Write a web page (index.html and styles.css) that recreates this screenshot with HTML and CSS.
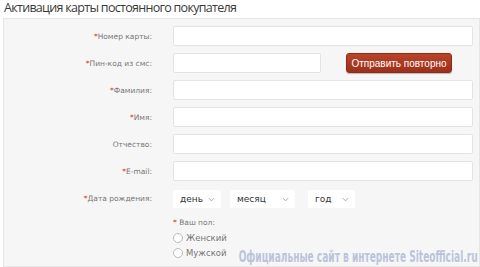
FILE: index.html
```html
<!DOCTYPE html>
<html lang="ru">
<head>
    <meta charset="UTF-8">
    <meta name="viewport" content="width=device-width, initial-scale=1.0">
    <title>Активация карты постоянного покупателя</title>
    <link rel="stylesheet" href="styles.css">
</head>
<body>
    <h1 class="title">Активация карты постоянного покупателя</h1>
    <div class="panel">
        <div class="row">
            <label class="label"><span class="req">*</span>Номер карты:</label>
            <input class="field" type="text">
        </div>
        <div class="row">
            <label class="label"><span class="req">*</span>Пин-код из смс:</label>
            <div class="inline">
                <input class="field short" type="text">
                <button class="resend">Отправить повторно</button>
            </div>
        </div>
        <div class="row">
            <label class="label"><span class="req">*</span>Фамилия:</label>
            <input class="field" type="text">
        </div>
        <div class="row">
            <label class="label"><span class="req">*</span>Имя:</label>
            <input class="field" type="text">
        </div>
        <div class="row">
            <label class="label">Отчество:</label>
            <input class="field" type="text">
        </div>
        <div class="row">
            <label class="label"><span class="req">*</span>E-mail:</label>
            <input class="field" type="text">
        </div>
        <div class="row">
            <label class="label"><span class="req">*</span>Дата рождения:</label>
            <div class="inline dates">
                <div class="select day">день <svg class="chev" viewBox="0 0 8 5"><path d="M1 1l3 3 3-3" fill="none" stroke="#999" stroke-width="1"/></svg></div>
                <div class="select month">месяц <svg class="chev" viewBox="0 0 8 5"><path d="M1 1l3 3 3-3" fill="none" stroke="#999" stroke-width="1"/></svg></div>
                <div class="select year">год <svg class="chev" viewBox="0 0 8 5"><path d="M1 1l3 3 3-3" fill="none" stroke="#999" stroke-width="1"/></svg></div>
            </div>
        </div>
        <div class="row">
            <div></div>
            <div class="gender">
                <div class="gender-title"><span class="req">*</span> Ваш пол:</div>
                <label class="radio"><span class="dot"></span>Женский</label>
                <label class="radio"><span class="dot"></span>Мужской</label>
            </div>
        </div>
    </div>
    <div class="watermark">Официальные сайт в интернете Siteofficial.ru</div>
</body>
</html>
```

FILE: styles.css
```css
html, body {
    margin: 0;
    background: #fff;
    overflow: hidden;
}

body {
    width: 480px;
    height: 267px;
    position: relative;
    font-family: "DejaVu Sans", Verdana, sans-serif;
}

.title {
    margin: 0;
    padding-left: 4px;
    height: 18px;
    font-family: "Open Sans", "Segoe UI", sans-serif;
    font-weight: normal;
    font-size: 12.5px;
    letter-spacing: -0.7px;
    line-height: 16px;
    color: #3a3a3a;
}

.panel {
    margin-left: 3px;
    border: 1px solid #e6e6e6;
    background: #f6f6f6;
    padding-top: 7px;
    height: 240px;
}

.row {
    display: grid;
    grid-template-columns: 148px 300px;
    column-gap: 21px;
    margin-bottom: 7px;
}

.label {
    text-align: right;
    font-size: 7.5px;
    color: #777;
    padding-top: 6px;
}

.req {
    color: #c8352a;
}

.field {
    box-sizing: border-box;
    height: 20px;
    width: 300px;
    margin: 0;
    border: 1px solid #e4e4e4;
    border-radius: 2px;
    background: #fff;
}

.field.short {
    width: 148px;
}

.inline {
    display: flex;
    align-items: center;
}

.resend {
    margin-left: 25px;
    width: 106px;
    height: 20px;
    padding: 0;
    border: 1px solid #8e2a16;
    border-radius: 3px;
    background: linear-gradient(#b8442a, #9c3019);
    color: #fff;
    font-family: "Liberation Sans", Arial, sans-serif;
    font-size: 10px;
    box-shadow: 0 1px 1px rgba(0, 0, 0, 0.25);
}

.dates {
    padding-top: 2px;
}

.select {
    box-sizing: border-box;
    height: 18px;
    background: #fff;
    border-radius: 2px;
    display: flex;
    align-items: center;
    justify-content: space-between;
    padding: 0 6px 0 7px;
    font-size: 9px;
    color: #333;
    margin-right: 9px;
}

.select.day { width: 48px; }
.select.month { width: 65px; margin-right: 13px; }
.select.year { width: 47px; }

.chev {
    width: 7px;
    height: 5px;
}

.gender {
    color: #777;
    padding-top: 1px;
}

.gender-title {
    height: 14px;
    line-height: 14px;
    font-size: 7.5px;
}

.radio {
    display: flex;
    align-items: center;
    height: 15px;
    font-size: 8.5px;
}

.dot {
    box-sizing: border-box;
    width: 10px;
    height: 10px;
    border: 1px solid #bbb;
    border-radius: 50%;
    background: #fff;
    margin-right: 3px;
}

.watermark {
    position: absolute;
    right: 2px;
    bottom: 1px;
    font-family: "DejaVu Sans Condensed", "DejaVu Sans", sans-serif;
    font-weight: bold;
    font-size: 15px;
    line-height: 17px;
    color: #bac5da;
    white-space: nowrap;
    transform: scaleX(0.67);
    transform-origin: right bottom;
}
```
